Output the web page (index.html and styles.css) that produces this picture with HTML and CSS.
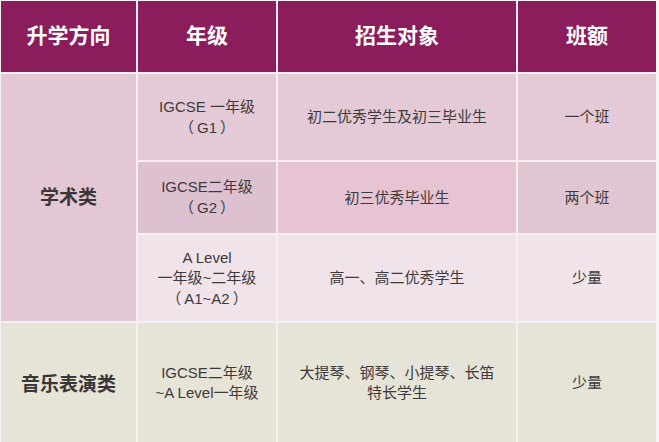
FILE: index.html
```html
<!DOCTYPE html>
<html lang="zh-CN">
<head>
<meta charset="utf-8">
<title>升学方向</title>
<link rel="stylesheet" href="styles.css">
</head>
<body>
<div class="table">
  <div class="cell head">升学方向</div>
  <div class="cell head">年级</div>
  <div class="cell head">招生对象</div>
  <div class="cell head">班额</div>

  <div class="cell cat academic">学术类</div>
  <div class="cell r1"><p class="txt">IGCSE 一年级<br><span class="paren">（</span>G1<span class="paren">）</span></p></div>
  <div class="cell r1">初二优秀学生及初三毕业生</div>
  <div class="cell r1">一个班</div>

  <div class="cell r2a"><p class="txt">IGCSE二年级<br><span class="paren">（</span>G2<span class="paren">）</span></p></div>
  <div class="cell r2b">初三优秀毕业生</div>
  <div class="cell r2c">两个班</div>

  <div class="cell r3"><p class="txt">A Level<br>一年级~二年级<br><span class="paren">（</span>A1~A2<span class="paren">）</span></p></div>
  <div class="cell r3">高一、高二优秀学生</div>
  <div class="cell r3">少量</div>

  <div class="cell cat music">音乐表演类</div>
  <div class="cell r4"><p class="txt">IGCSE二年级<br>~A Level一年级</p></div>
  <div class="cell r4"><p class="txt">大提琴、钢琴、小提琴、长笛<br>特长学生</p></div>
  <div class="cell r4">少量</div>
</div>
</body>
</html>
```

FILE: styles.css
```css
html, body {
  margin: 0;
  padding: 0;
  background: #f9f3f6;
}

body {
  width: 659px;
  height: 442px;
  overflow: hidden;
  font-family: "Liberation Sans", "Noto Sans CJK SC", sans-serif;
}

.table {
  display: grid;
  grid-template-columns: 135px 138px 238px 138px;
  grid-template-rows: 71px 86px 71px 86px 124px;
  gap: 2px;
  padding: 1px 0 0 1px;
  background: #f7eef2;
  width: 655px;
}

.cell {
  display: flex;
  align-items: center;
  justify-content: center;
  text-align: center;
  font-size: 15px;
  line-height: 20px;
  color: #3d3a3c;
}

.txt {
  margin: 0;
}

.paren {
  font-family: "Noto Sans CJK SC", sans-serif;
  padding: 0 3px;
}

.head {
  background: #8b1d5d;
  color: #ffffff;
  font-size: 21px;
  font-weight: bold;
  line-height: 24px;
  padding-bottom: 2px;
}

.cat {
  font-size: 19px;
  font-weight: bold;
  color: #3a3637;
}

.academic {
  grid-row: span 3;
  background: #e4c7d4;
}

.music {
  background: #e6e3d7;
}

.r1 {
  background: #e3cad6;
}

.r2a {
  background: #ddc1d0;
}

.r2b {
  background: #e6c4d4;
}

.r2c {
  background: #e0c6d3;
}

.r3 {
  background: #f1e3ea;
}

.r4 {
  background: #e6e3d7;
  padding-bottom: 4px;
}
```
